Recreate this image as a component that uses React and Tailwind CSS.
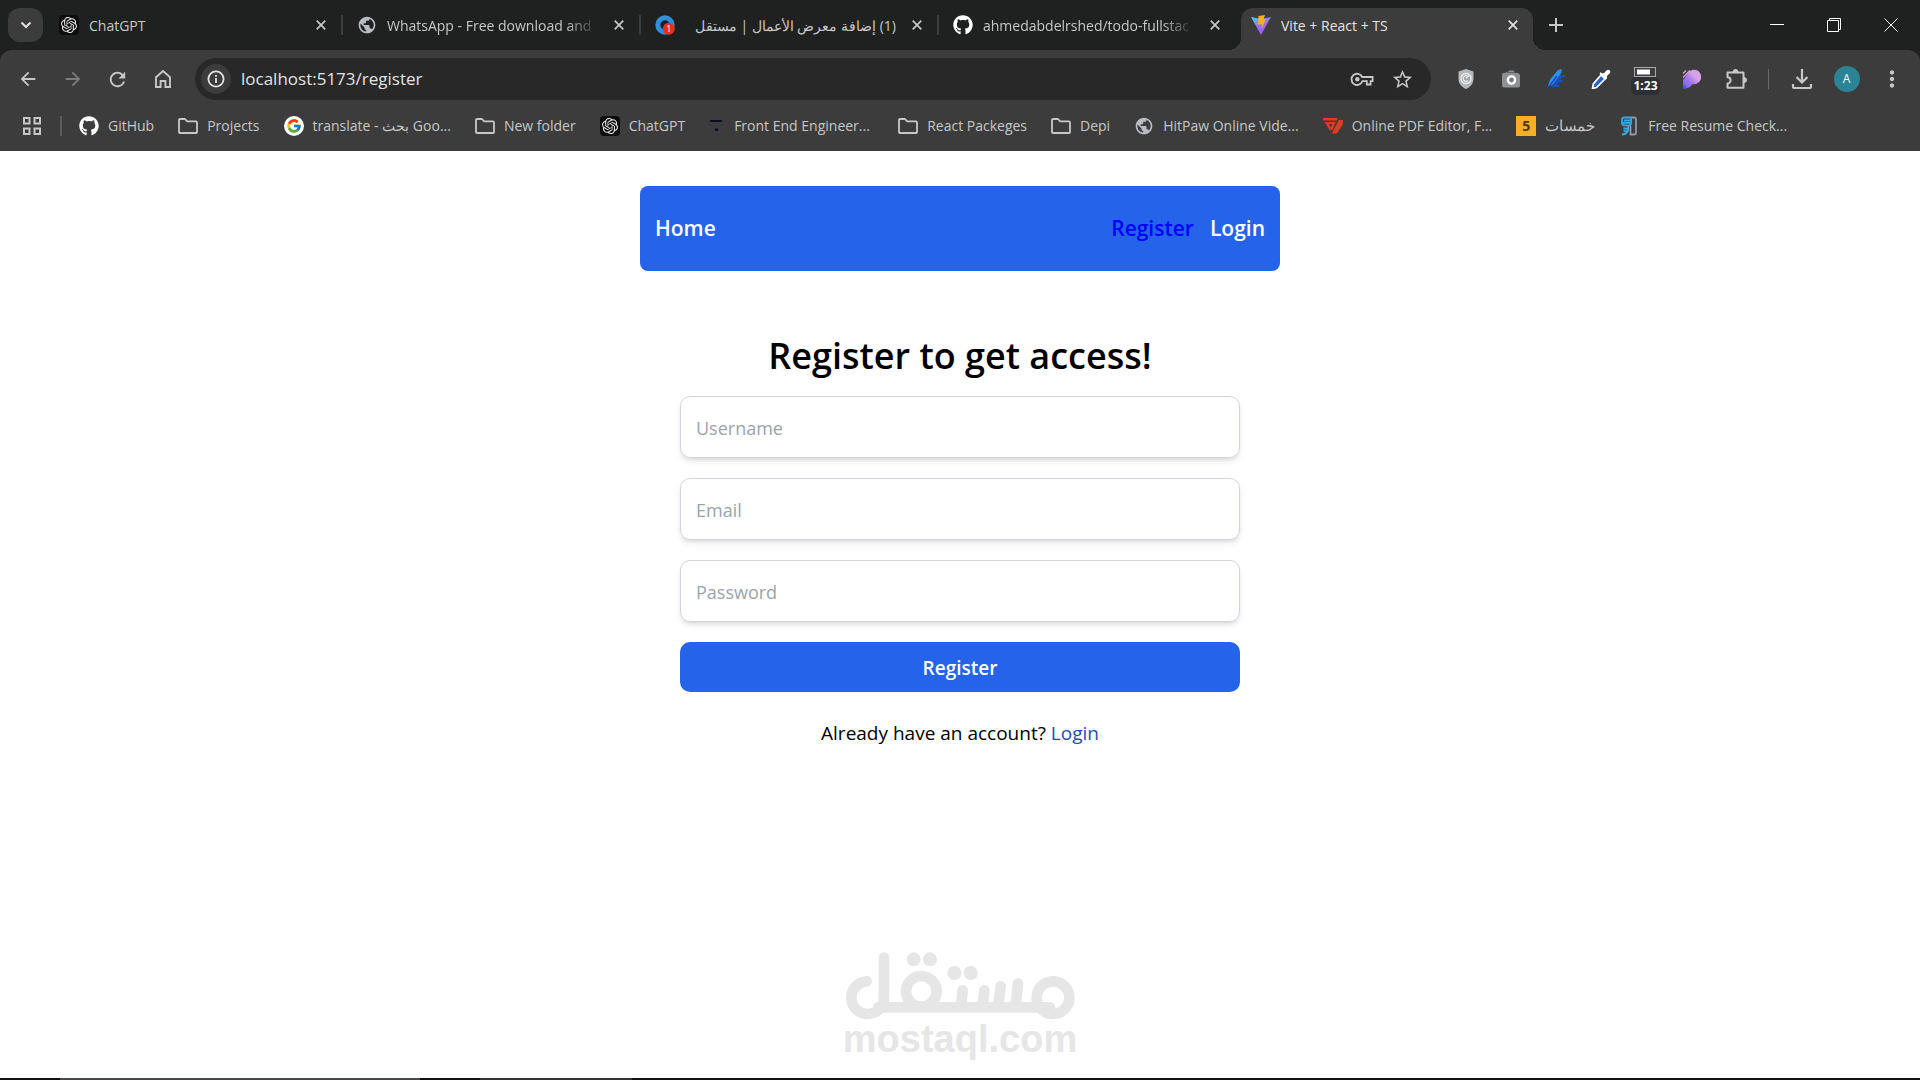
import React, { useState } from "react";
import { FaGithub } from "react-icons/fa";
import { FcGoogle } from "react-icons/fc";
import { SiOpenai } from "react-icons/si";
import { MdPublic, MdArrowBack, MdArrowForward, MdRefresh, MdStarBorder, MdMoreVert } from "react-icons/md";

/* ---------- Icons ---------- */

const OpenAiIcon = () => (
  <span className="flex size-5 items-center justify-center rounded-sm bg-[#0d0d0d]">
    <SiOpenai className="size-4 text-[#e8e8e8]" />
  </span>
);

const GithubIcon = () => <FaGithub className="size-5 text-white" />;

const GlobeIcon = () => <MdPublic className="size-5 text-[#b9bcc2]" />;

const GoogleIcon = () => (
  <span className="flex size-5 items-center justify-center rounded-full bg-white">
    <FcGoogle className="size-4" />
  </span>
);

const FolderIcon = () => (
  <svg viewBox="0 0 20 20" className="size-5" fill="none" stroke="#c7c7c7" strokeWidth="1.8" strokeLinejoin="round">
    <path d="M1 4a1 1 0 0 1 1-1h5l2.2 2.4H18a1 1 0 0 1 1 1V16a1 1 0 0 1-1 1H2a1 1 0 0 1-1-1z" />
  </svg>
);

const ViteIcon = () => (
  <svg viewBox="0 0 20 20" className="size-5">
    <defs>
      <linearGradient id="vite" x1="0" y1="0" x2="0.6" y2="1">
        <stop offset="0" stopColor="#41d1ff" />
        <stop offset="0.6" stopColor="#9b6bf5" />
        <stop offset="1" stopColor="#a25cf0" />
      </linearGradient>
    </defs>
    <path d="M0 2 10 4l10-2-10 18z" fill="url(#vite)" />
    <path d="M7.5 1 14 0l-1.5 4.5 2.5-.4-4.5 10 .3-5.2-3.8.8z" fill="#f9ae24" />
  </svg>
);

const MostaqlIcon = () => (
  <svg viewBox="0 0 20 20" className="size-5">
    <circle cx="10" cy="10" r="7.2" fill="none" stroke="#2f8fdb" strokeWidth="5" />
    <circle cx="13.8" cy="13.8" r="6" fill="#e0321c" />
    <text x="13.8" y="17" fontSize="9" textAnchor="middle" fill="#fff" fontFamily="Open Sans, sans-serif">1</text>
  </svg>
);

const FrontEndIcon = () => (
  <svg viewBox="0 0 16 20" className="h-5 w-4">
    <path d="M1 4h12v2H1z" fill="#0b0d26" />
    <path d="M6 12.5h3V15H6z" fill="#0b0d26" />
  </svg>
);

const PdfIcon = () => (
  <svg viewBox="0 0 20 20" className="size-5" fill="#e23b20">
    <path fillRule="evenodd" d="M0 2h15l-1.4 2.5H0zM1.8 6h11l-3.6 8.3H6.6zM6 8l1.6 3.4L9.4 8z" />
    <path d="M15.8 4H20l-.3 4.5-5.8 9-5.2.3z" />
  </svg>
);

const KhamsatIcon = () => (
  <span className="flex size-5 items-center justify-center bg-[#f8ae25] text-sm font-bold text-[#4b3a1a]">5</span>
);

const ResumeIcon = () => (
  <svg viewBox="0 0 20 20" className="size-5" fill="none" strokeWidth="1.8">
    <path d="M12.5 1.500H15a2 2 0 0 1 2 2V16.500a2 2 0 0 1-2 2H11.500V10" stroke="#9298a0" />
    <path
      d="M5 1.500h7v5.800a2 2 0 0 1-2 2H5a2 2 0 0 1-2-2V3.500a2 2 0 0 1 2-2zM5 4.500h6M4 6.800h7M9.500 9.500c0 5.500-1 9-6.500 9M4.500 12.500h4M4.500 15.200h4"
      stroke="#38a9e8"
    />
  </svg>
);

const HomeIcon = () => (
  <svg viewBox="0 0 20 20" className="size-5" fill="none" stroke="currentColor" strokeWidth="1.9">
    <path d="M3 8.200 10 2l7 6.200V18h-4.600v-6H7.600v6H3z" />
  </svg>
);

const KeyIcon = () => (
  <svg viewBox="0 0 24 20" className="h-5 w-6" fill="none" stroke="#c7c7c7" strokeWidth="1.8">
    <path d="M12.200 8H22.600v4.200H20.600v3.300H16.800v-3.300H12.400A5.600 5.600 0 1 1 12.200 8z" />
    <circle cx="7.300" cy="10.300" r="2.200" fill="#c7c7c7" stroke="none" />
  </svg>
);

const ShieldIcon = () => (
  <svg viewBox="0 0 20 20" className="size-5">
    <path d="M10 0 17.500 2.500v7c0 5-3 8.500-7.500 10.500C5.500 18 2.500 14.500 2.500 9.500v-7z" fill="#b4b8bb" />
    <circle cx="10" cy="9.500" r="5" fill="#9ea3a6" stroke="#eceeef" strokeWidth="1.400" />
    <path d="M12 7.500a2.800 2.800 0 1 0 0 4M10 9.500l3-3" fill="none" stroke="#e8eaeb" strokeWidth="1.200" />
  </svg>
);

const CameraIcon = () => (
  <svg viewBox="0 0 20 20" className="size-5">
    <path d="M6.500 3.500 8 1.500h4.500L14 3.500z" fill="#8d8d8d" />
    <path d="M2 4h2.500v-.8h2V4H17l2 2v10.500a2 2 0 0 1-2 2H3a2 2 0 0 1-2-2V5z" fill="#8f9093" />
    <circle cx="10.500" cy="11" r="3.600" fill="#77787c" stroke="#fff" strokeWidth="2.400" />
  </svg>
);

const FeatherIcon = () => (
  <svg viewBox="0 0 20 20" className="size-5">
    <path d="M10 6h10l-1.500 2.600h-3.500L14 11h3l-1.500 2.600h-3.300L11.500 16H14l-1.200 2H6z" fill="#1b4fc0" />
    <path d="M1.500 19 4 10.500 12 1l4-1-1 4.500L6.500 15.500z" fill="#2f8df0" />
    <path d="M1 20 11 7" stroke="#123d9c" strokeWidth="1.200" />
  </svg>
);

const DropperIcon = () => (
  <svg viewBox="0 0 20 20" className="size-5">
    <path d="m10 6 4 4-8.500 8.500-4 1 .8-4.500z" fill="#2567c9" stroke="#fff" strokeWidth="1.700" />
    <path d="m11.500 4.500 1.500-.5L16 1a2.200 2.200 0 0 1 3 3l-3 3v2.500l-1.500 1-6-6 1-1.300z" fill="#fff" />
  </svg>
);

const TimerIcon = () => (
  <span className="flex flex-col items-center pt-1">
    <svg viewBox="0 0 22 10" className="h-[10px] w-[22px]">
      <rect x="0.500" y="0.500" width="21" height="9" fill="#3c3c3c" stroke="#a9a9a9" />
      <rect x="3" y="2.500" width="13" height="5" fill="#fff" />
    </svg>
    <span className="rounded-md bg-[#2d2f34] px-[2px] text-[12px] leading-[18px] font-bold text-white">1:23</span>
  </span>
);

const PIcon = () => (
  <svg viewBox="0 0 20 20" className="size-5">
    <defs>
      <linearGradient id="p-fill" x1="1" y1="0" x2="0" y2="1">
        <stop offset="0.35" stopColor="#d9a2e6" />
        <stop offset="0.6" stopColor="#a777ee" />
        <stop offset="1" stopColor="#6d5cf2" />
      </linearGradient>
    </defs>
    <path d="M2 11 9 2a7.200 7.200 0 1 1 2.500 13c-1.500 3-4.500 4.500-9.500 4.500z" fill="url(#p-fill)" />
    <path d="M2 4.500 5 1.500M2 8.500l7-7" stroke="#d9a2e6" strokeWidth="1.300" />
    <path d="M2 16.500h3v3H2z" fill="#3f5df2" />
  </svg>
);

const PuzzleIcon = () => (
  <svg viewBox="0 0 22 22" className="size-[22px]">
    <path
      d="M2.500 4.500H18.500V19.800H2.500V15.500a3 3 0 0 0 0-6.200z"
      fill="none"
      stroke="#c7c7c7"
      strokeWidth="2"
      strokeLinejoin="round"
    />
    <path d="M8 4a2.500 2.500 0 0 1 5 0zM19 9.500a2.500 2.500 0 0 1 0 5z" fill="#c7c7c7" stroke="#c7c7c7" />
  </svg>
);

const DownloadIcon = () => (
  <svg viewBox="0 0 22 22" className="size-[22px]" fill="none" stroke="#c7c7c7" strokeWidth="2.200">
    <path d="M11 1v13M5.500 9l5.500 5.500L16.500 9M2 16v2.500a1.500 1.500 0 0 0 1.500 1.500h15a1.500 1.500 0 0 0 1.500-1.500V16" />
  </svg>
);

const CrossIcon = () => (
  <svg viewBox="0 0 10 10" className="size-[10px]" stroke="currentColor" strokeWidth="1.700">
    <path d="M.7.7l8.600 8.600M9.300.7.7 9.300" />
  </svg>
);

/* ---------- Data ---------- */

const TABS = [
  { title: "ChatGPT", icon: <OpenAiIcon /> },
  { title: "WhatsApp - Free download and", icon: <GlobeIcon />, fade: true },
  { title: "(1) إضافة معرض الأعمال | مستقل", icon: <MostaqlIcon />, rtl: true },
  { title: "ahmedabdelrshed/todo-fullstac", icon: <GithubIcon />, fade: true },
  { title: "Vite + React + TS", icon: <ViteIcon />, active: true },
];

const BOOKMARKS = [
  { title: "GitHub", icon: <GithubIcon /> },
  { title: "Projects", icon: <FolderIcon />, folder: true },
  { title: "translate - بحث Goo...", icon: <GoogleIcon /> },
  { title: "New folder", icon: <FolderIcon />, folder: true },
  { title: "ChatGPT", icon: <OpenAiIcon /> },
  { title: "Front End Engineer...", icon: <FrontEndIcon />, className: "w-[165px]" },
  { title: "React Packeges", icon: <FolderIcon />, folder: true },
  { title: "Depi", icon: <FolderIcon />, folder: true },
  { title: "HitPaw Online Vide...", icon: <GlobeIcon /> },
  { title: "Online PDF Editor, F...", icon: <PdfIcon /> },
  { title: "خمسات", icon: <KhamsatIcon />, className: "text-[15px]" },
  { title: "Free Resume Check...", icon: <ResumeIcon /> },
];

const EXTENSIONS = [
  { name: "Shield", icon: <ShieldIcon /> },
  { name: "Screenshot", icon: <CameraIcon /> },
  { name: "Feather", icon: <FeatherIcon /> },
  { name: "Color picker", icon: <DropperIcon /> },
  { name: "Timer", icon: <TimerIcon /> },
  { name: "Pixel", icon: <PIcon /> },
  { name: "Extensions", icon: <PuzzleIcon /> },
];

const FIELDS = [
  { name: "username", type: "text", placeholder: "Username" },
  { name: "email", type: "email", placeholder: "Email" },
  { name: "password", type: "password", placeholder: "Password" },
];

/* ---------- Browser ---------- */

const Tab = ({ title, icon, rtl, fade, active, last }) => (
  <div className="flex h-[42px] max-w-[298px] min-w-0 flex-1 items-center">
    <div
      className={
        active
          ? "relative flex h-full min-w-0 flex-1 items-center rounded-t-xl bg-[#3c3c3c] pr-[15px] pl-[10px] text-[#e3e3e3] before:absolute before:bottom-0 before:-left-3 before:size-3 before:bg-[radial-gradient(circle_at_0_0,transparent_12px,#3c3c3c_12px)] after:absolute after:-right-3 after:bottom-0 after:size-3 after:bg-[radial-gradient(circle_at_100%_0,transparent_12px,#3c3c3c_12px)]"
          : "flex h-full min-w-0 flex-1 items-center pr-[15px] pl-[10px] text-[#c7c7c7]"
      }
    >
      <button
        type="button"
        dir={rtl ? "rtl" : "ltr"}
        className="flex min-w-0 flex-1 items-center gap-[10px] pb-2 text-[14px]"
      >
        <span className={rtl ? "order-2 shrink-0" : "shrink-0"}>{icon}</span>
        <span
          className={
            fade
              ? "flex-1 overflow-hidden text-start whitespace-nowrap [mask-image:linear-gradient(to_right,black_85%,transparent)]"
              : "flex-1 overflow-hidden text-start whitespace-nowrap"
          }
        >
          {title}
        </span>
      </button>
      <button type="button" aria-label="Close tab" className="ml-4 pb-2">
        <CrossIcon />
      </button>
    </div>
    <span className={active || last ? "w-[6px]" : "mr-1 mb-2 h-5 w-[2px] bg-[#3c3c3c]"} />
  </div>
);

const TabStrip = () => (
  <div className="flex h-[50px] items-end bg-[#1f2120] pl-2">
    <button
      type="button"
      aria-label="Search tabs"
      className="mr-[6px] mb-2 flex h-[34px] w-[35px] items-center justify-center rounded-xl bg-[#3c3c3c]"
    >
      <svg viewBox="0 0 12 8" className="h-2 w-3" fill="none" stroke="#e3e3e3" strokeWidth="2">
        <path d="m1.500 1.500 4.500 4.500 4.500-4.500" />
      </svg>
    </button>
    <div className="flex min-w-0 flex-1">
      {TABS.map((tab, i) => (
        <Tab key={tab.title} {...tab} last={i === TABS.length - 2} />
      ))}
      <button type="button" aria-label="New tab" className="flex size-[34px] items-center justify-center text-[#c7c7c7]">
        <svg viewBox="0 0 14 14" className="size-[14px]" stroke="currentColor" strokeWidth="2">
          <path d="M7 0v14M0 7h14" />
        </svg>
      </button>
    </div>
    <div className="flex h-full pr-px text-white">
      <button type="button" aria-label="Minimize" className="flex w-[57px] items-center justify-center">
        <svg viewBox="0 0 14 14" className="size-[14px]" stroke="currentColor">
          <path d="M0 6.500h14" />
        </svg>
      </button>
      <button type="button" aria-label="Restore" className="flex w-[57px] items-center justify-center">
        <svg viewBox="0 0 14 14" className="size-[14px]" fill="none" stroke="currentColor">
          <path d="M.5 2.500h11v11H.5zM2.500 2.500v-2h11v11h-2" />
        </svg>
      </button>
      <button type="button" aria-label="Close" className="flex w-[57px] items-center justify-center">
        <svg viewBox="0 0 14 14" className="size-[14px]" stroke="currentColor">
          <path d="m.5.500 13 13M13.500.5l-13 13" />
        </svg>
      </button>
    </div>
  </div>
);

const ToolButton = ({ label, children }) => (
  <button type="button" aria-label={label} className="flex h-[42px] w-[45px] items-center justify-center">
    {children}
  </button>
);

const Toolbar = () => (
  <div className="flex h-[50px] items-center pt-2 pr-[6px] pl-[5px] text-[#c7c7c7]">
    <ToolButton label="Back">
      <MdArrowBack className="size-[22px]" />
    </ToolButton>
    <ToolButton label="Forward">
      <MdArrowForward className="size-[22px] text-[#7c7c7c]" />
    </ToolButton>
    <ToolButton label="Reload">
      <MdRefresh className="size-[23px]" />
    </ToolButton>
    <ToolButton label="Home">
      <HomeIcon />
    </ToolButton>
    <div className="mr-3 ml-[10px] flex h-[42px] flex-1 items-center rounded-full bg-[#282828] pl-[6px]">
      <button
        type="button"
        aria-label="Site information"
        className="flex size-[30px] items-center justify-center rounded-full bg-[#3c3c3c]"
      >
        <svg viewBox="0 0 18 18" className="size-[18px]" fill="none" stroke="#e3e3e3" strokeWidth="1.800">
          <circle cx="9" cy="9" r="7.600" />
          <path d="M9 8v5M9 5v1.800" />
        </svg>
      </button>
      <input
        type="text"
        aria-label="Address bar"
        defaultValue="localhost:5173/register"
        className="ml-[10px] min-w-0 flex-1 bg-transparent text-[17px] text-[#e3e3e3] outline-none"
      />
      <button type="button" aria-label="Passwords" className="flex w-10 justify-center">
        <KeyIcon />
      </button>
      <button type="button" aria-label="Bookmark this tab" className="mr-[9px] flex w-10 justify-center">
        <MdStarBorder className="size-[23px]" />
      </button>
    </div>
    {EXTENSIONS.map((ext) => (
      <ToolButton key={ext.name} label={ext.name}>
        {ext.icon}
      </ToolButton>
    ))}
    <span className="mx-[10px] h-5 w-px bg-[#6a6a6a]" />
    <ToolButton label="Downloads">
      <DownloadIcon />
    </ToolButton>
    <ToolButton label="Profile">
      <span className="flex size-[26px] items-center justify-center rounded-full bg-[#2a8496] text-[12px] text-white">A</span>
    </ToolButton>
    <ToolButton label="Menu">
      <MdMoreVert className="size-[26px]" />
    </ToolButton>
  </div>
);

const Bookmarks = () => (
  <div className="flex h-[51px] items-center overflow-hidden pl-[22px] text-[14px] whitespace-nowrap text-[#c7c7c7]">
    <button type="button" aria-label="Apps" className="shrink-0">
      <svg viewBox="0 0 20 20" className="size-5" fill="none" stroke="currentColor" strokeWidth="2">
        <path d="M2 2h5.500v5.500H2zM12.500 2H18v5.500h-5.500zM2 12.500h5.500V18H2zM12.500 12.500H18V18h-5.500z" />
      </svg>
    </button>
    <span className="mr-[17px] ml-[18px] h-5 w-[2px] shrink-0 bg-[#5c5c5c]" />
    <div className="flex items-center gap-6">
      {BOOKMARKS.map(({ title, icon, folder, className = "" }) =>
        folder ? (
          <button key={title} type="button" className="flex items-center gap-[9px]">
            {icon}
            {title}
          </button>
        ) : (
          <a key={title} href="#" className={`flex items-center gap-[9px] ${className}`}>
            {icon}
            {title}
          </a>
        )
      )}
    </div>
  </div>
);

/* ---------- Page ---------- */

const Navbar = () => (
  <nav className="mx-auto mt-[35px] flex h-[85px] w-full max-w-[640px] items-center justify-between rounded-lg bg-[#2563eb] px-[15px] text-[21px] font-semibold text-white">
    <a href="#">Home</a>
    <div className="flex gap-4">
      <a href="#" className="text-[#0000ff]">Register</a>
      <a href="#">Login</a>
    </div>
  </nav>
);

const RegisterForm = () => {
  const [values, setValues] = useState({ username: "", email: "", password: "" });

  const handleChange = (e) => setValues({ ...values, [e.target.name]: e.target.value });

  return (
    <form onSubmit={(e) => e.preventDefault()} className="mx-auto mt-[60px] w-full max-w-[560px]">
      <h2 className="mb-4 text-center text-[36px] leading-[49px] font-semibold">Register to get access!</h2>
      <div className="space-y-5">
        {FIELDS.map((field) => (
          <input
            key={field.name}
            {...field}
            aria-label={field.placeholder}
            value={values[field.name]}
            onChange={handleChange}
            className="block h-[62px] w-full rounded-[10px] border border-[#d1d5db] px-[15px] pt-[2px] text-[18px] shadow-md placeholder:text-[#9ca3af]"
          />
        ))}
        <button
          type="submit"
          className="h-[50px] w-full rounded-[10px] bg-[#2563eb] pt-[2px] text-[19px] font-semibold text-white"
        >
          Register
        </button>
      </div>
      <p className="mt-[26px] text-center text-[19px] leading-[30px]">
        Already have an account?{" "}
        <a href="#" className="text-[#1e4fae]">Login</a>
      </p>
    </form>
  );
};

const Watermark = () => (
  <div className="mx-auto mt-auto flex flex-col items-center pb-5 text-[#e6e6e6]">
    <svg viewBox="75 66 690 204" className="h-[68px] w-[230px]" fill="none" stroke="currentColor" strokeWidth="32" strokeLinecap="round">
      <path d="M140 154A49 49 0 1 0 192 203V83" />
      <path d="M175 232H690" />
      <circle cx="304" cy="184" r="46" />
      <path d="M428 181 423 230M493 181 488 230M542 169 534 230M594 161 586 230" />
      <circle cx="699" cy="203" r="49" />
      <g fill="currentColor" stroke="none">
        <circle cx="281" cy="88" r="21" />
        <circle cx="330" cy="88" r="21" />
        <circle cx="403" cy="129" r="21" />
        <circle cx="452" cy="129" r="21" />
      </g>
    </svg>
    <span className="font-['Liberation_Sans',sans-serif] text-[38px] leading-[38px] font-bold">mostaql.com</span>
  </div>
);

export default function App() {
  return (
    <div className="flex min-h-screen flex-col bg-white font-['Open_Sans','Noto_Sans',sans-serif] text-black">
      <header className="bg-[#1f2120]">
        <TabStrip />
        <div className="rounded-t-xl bg-[#3c3c3c]">
          <Toolbar />
          <Bookmarks />
        </div>
      </header>
      <main className="flex flex-1 flex-col">
        <Navbar />
        <RegisterForm />
        <Watermark />
      </main>
      {/* top edge of the taskbar */}
      <div className="flex h-[2px] bg-[#111111]">
        <span className="ml-[60px] w-[360px] bg-[#4a4648]" />
        <span className="ml-[60px] w-[152px] bg-[#333333]" />
      </div>
    </div>
  );
}
